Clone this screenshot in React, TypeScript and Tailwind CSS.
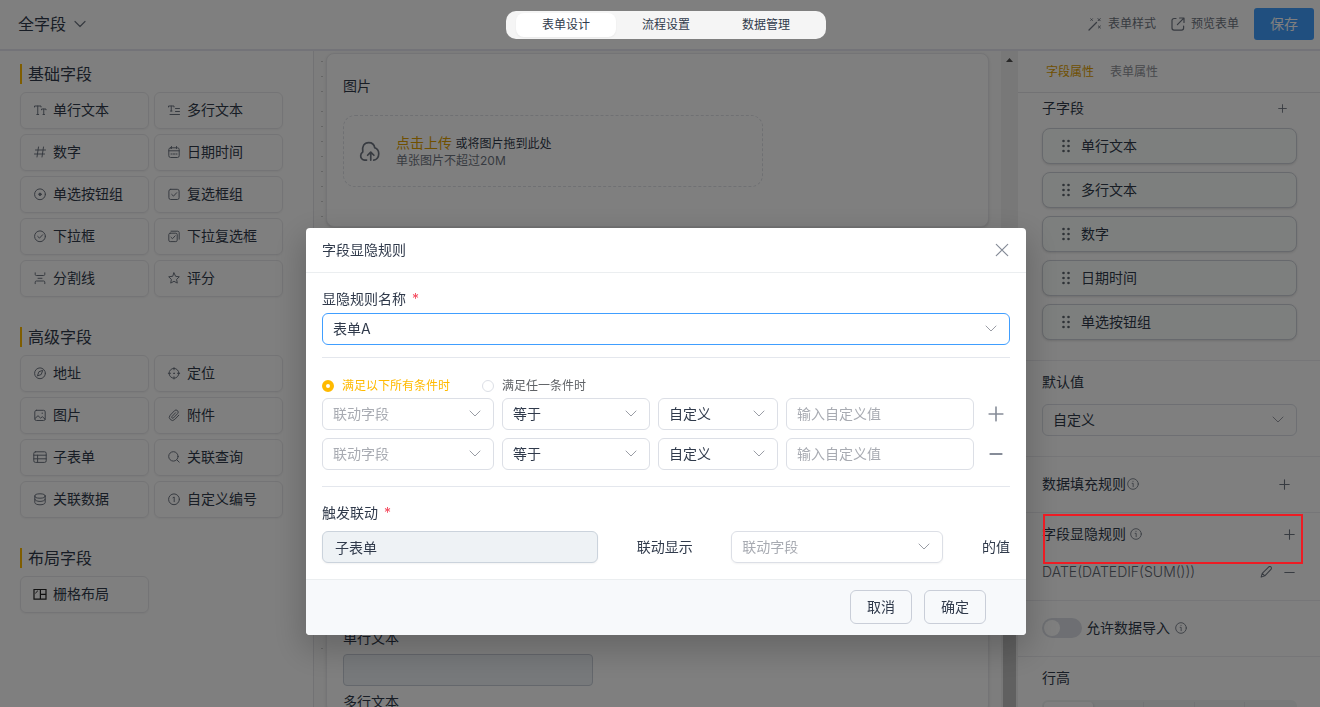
import { useId, useState, type ReactNode } from "react";
import clsx from "clsx";

interface FieldItem {
  label: string;
  icon: ReactNode;
}

interface FieldGroup {
  title: string;
  items: FieldItem[];
}

const fieldGroups: FieldGroup[] = [
  {
    title: "基础字段",
    items: [
      {
        label: "单行文本",
        icon: <path d="M1.5 4V3h6.5v1M4.75 3v8.5M3.8 11.5h1.9M8.5 6.8V6H13v.8M10.75 6v5.5M10 11.5h1.5" />,
      },
      {
        label: "多行文本",
        icon: <path d="M1.5 4V3H7v1M4.25 3v5M3.5 8h1.5M8.5 5.5h4M8.5 8.5h4M3 11.5h9.5" />,
      },
      { label: "数字", icon: <path d="M5.5 2 4 12M10.5 2 9 12M2.5 5h10M1.5 9h10" /> },
      {
        label: "日期时间",
        icon: (
          <>
            <rect x="1.8" y="2.8" width="10.4" height="9.7" rx="1.8" />
            <path d="M4.5 1.5v2M9.5 1.5v2M1.8 5.8h10.4M4 9h1.2M6.4 9h1.2M8.8 9H10" />
          </>
        ),
      },
      {
        label: "单选按钮组",
        icon: (
          <>
            <circle cx="7" cy="7.3" r="5.4" />
            <circle cx="7" cy="7.3" r="1.2" fill="currentColor" />
          </>
        ),
      },
      {
        label: "复选框组",
        icon: (
          <>
            <rect x="1.9" y="2.3" width="10.2" height="10.2" rx="1.8" />
            <path d="m4.7 7.4 1.8 1.7 3.2-3.4" />
          </>
        ),
      },
      {
        label: "下拉框",
        icon: (
          <>
            <circle cx="7" cy="7.3" r="5.4" />
            <path d="m4.7 7.4 1.8 1.7 3.2-3.4" />
          </>
        ),
      },
      {
        label: "下拉复选框",
        icon: (
          <>
            <rect x="1.8" y="4.2" width="8.4" height="8.4" rx="1.4" />
            <path d="M4 2.2h6.8c.8 0 1.4.6 1.4 1.4v6.6M4 8.3l1.5 1.4 2.7-2.9" />
          </>
        ),
      },
      {
        label: "分割线",
        icon: <path d="M2.2 1.8v1.6c0 .7.4 1.1 1.1 1.1h7.4c.7 0 1.1-.4 1.1-1.1V1.8M5 7.3h4M2.2 12.7v-1.6c0-.7.4-1.1 1.1-1.1h7.4c.7 0 1.1.4 1.1 1.1v1.6" />,
      },
      {
        label: "评分",
        icon: <path d="m7 1.9 1.6 3.4 3.7.5-2.7 2.6.7 3.7L7 10.3l-3.3 1.8.7-3.7-2.7-2.6 3.7-.5z" />,
      },
    ],
  },
  {
    title: "高级字段",
    items: [
      {
        label: "地址",
        icon: (
          <>
            <circle cx="7" cy="7.3" r="5.4" />
            <path d="M9.6 4.7 8.2 8.5 4.4 9.9l1.4-3.8z" />
          </>
        ),
      },
      {
        label: "定位",
        icon: (
          <>
            <circle cx="7" cy="7.3" r="4.9" />
            <circle cx="7" cy="7.3" r=".4" fill="currentColor" />
            <path d="M7 1.6v2.2M7 10.8V13M1.3 7.3h2.2M10.500 7.3h2.200" />
          </>
        ),
      },
      {
        label: "图片",
        icon: (
          <>
            <rect x="1.8" y="2.3" width="10.4" height="10.2" rx="1.6" />
            <path d="m2 10.5 3-2.8 2.6 2.4 1.7-1.4 2.8 2.4M9 5.2h.6" />
          </>
        ),
      },
      {
        label: "附件",
        icon: <path d="m11.8 7.2-4 4.2a3.1 3.1 0 0 1-4.6-4.2l4.3-4.5a2.1 2.1 0 0 1 3.1 2.9L6.5 9.9a1 1 0 0 1-1.5-1.4l3.6-3.8" />,
      },
      {
        label: "子表单",
        icon: (
          <>
            <rect x=".8" y="1.8" width="12.4" height="10.6" rx="1.6" />
            <path d="M.8 5.2h12.4M.8 8.8h12.4M4.6 5.2v7.2" />
          </>
        ),
      },
      {
        label: "关联查询",
        icon: (
          <>
            <circle cx="6.4" cy="6.4" r="4.7" />
            <path d="m9.8 9.8 2.400 2.400" />
          </>
        ),
      },
      {
        label: "关联数据",
        icon: (
          <>
            <ellipse cx="7" cy="4" rx="5.2" ry="2.2" />
            <path d="M1.8 4v6.6c0 1.2 2.3 2.2 5.2 2.2s5.2-1 5.2-2.2V4M1.8 7.2c0 1.2 2.3 2.2 5.2 2.2s5.2-1 5.2-2.2" />
          </>
        ),
      },
      {
        label: "自定义编号",
        icon: (
          <>
            <circle cx="7" cy="7.3" r="5.4" />
            <path d="M6 5.7 7.2 5v4.7" />
          </>
        ),
      },
    ],
  },
  {
    title: "布局字段",
    items: [
      {
        label: "栅格布局",
        icon: (
          <g className="text-[#222]" strokeWidth="1.2" strokeLinejoin="miter">
            <path d="M1 2.5h12v9.6H1zM7.4 2.5v9.600M7.4 7.3H13" />
            <path d="M2.600 6 4.600 4" strokeWidth="1" />
          </g>
        ),
      },
    ],
  },
];

const navTabs = ["表单设计", "流程设置", "数据管理"];
const subFields = ["单行文本", "多行文本", "数字", "日期时间", "单选按钮组"];

function Svg({ children, className }: { children: ReactNode; className: string }) {
  return (
    <svg
      viewBox="0 0 14 14"
      fill="none"
      stroke="currentColor"
      strokeLinecap="round"
      strokeLinejoin="round"
      aria-hidden="true"
      className={clsx("shrink-0", className)}
    >
      {children}
    </svg>
  );
}

function PlusIcon({ className }: { className: string }) {
  return (
    <Svg className={className}>
      <path d="M7 1v12M1 7h12" strokeWidth="1.4" />
    </Svg>
  );
}

function InfoIcon() {
  return (
    <Svg className="size-3 text-[#6f7682]">
      <circle cx="7" cy="7" r="6.2" />
      <path d="M6 6.2h1.2v4M7 3.8v.2" />
    </Svg>
  );
}

function SelectBox({
  id,
  label,
  options,
  placeholder,
  className,
  borderClass = "border-[#dcdfe6]",
}: {
  id?: string;
  label?: string;
  options: string[];
  placeholder?: boolean;
  className?: string;
  borderClass?: string;
}) {
  return (
    <div className={clsx("relative", className)}>
      <select
        id={id}
        aria-label={label}
        className={clsx(
          "h-8 w-full appearance-none rounded-md border bg-white pr-8 pl-2.5 text-sm outline-none",
          borderClass,
          placeholder ? "text-[#a8abb2]" : "text-[#303a4b]"
        )}
      >
        {options.map((option) => (
          <option key={option}>{option}</option>
        ))}
      </select>
      <Svg className="pointer-events-none absolute top-2 right-3 size-3.5 text-[#9a9da5]">
        <path d="m2 5 5 5 5-5" />
      </Svg>
    </div>
  );
}

function Header() {
  const [active, setActive] = useState(navTabs[0]);

  return (
    <header className="grid shrink-0 grid-cols-[1fr_auto_1fr] items-center border-b-2 border-[#e6e6f0] bg-white pr-1.5 pl-[18px]">
      <button className="flex h-[49px] items-center gap-[7px] justify-self-start pb-px text-base">
        全字段
        <Svg className="size-3.5 text-[#6f7682]">
          <path d="m2 4.5 5 5 5-5" strokeWidth="1.2" />
        </Svg>
      </button>

      <nav className="relative z-20 flex rounded-[10px] bg-[#f5f5f5] px-2.5 py-0.5">
        {navTabs.map((tab) => (
          <button
            key={tab}
            onClick={() => setActive(tab)}
            className={clsx(
              "h-6 w-[100px] rounded-lg text-xs",
              active === tab && "bg-white shadow-xs"
            )}
          >
            {tab}
          </button>
        ))}
      </nav>

      <div className="flex items-center gap-[15px] justify-self-end pb-px text-xs text-[#6f7682]">
        <button className="flex items-center gap-1.5">
          <Svg className="size-3.5">
            <path d="m1 13 7.500-7.500" strokeWidth="1.300" />
            <path d="M2.800 1.800l1.600 1.600M4.400 1.800 2.800 3.400M10 1.600l2.200 2.200M12.200 1.600 10 3.800M10.400 9l2 2M12.400 9l-2 2" />
          </Svg>
          表单样式
        </button>
        <button className="flex items-center gap-1.5">
          <Svg className="size-3.5">
            <path d="M5 1.5H3A2 2 0 0 0 1 3.5v7.6a2 2 0 0 0 2 2h7.6a2 2 0 0 0 2-2V9M8.6 1h4.4v4.4M12.6 1.4 6.4 7.6" strokeWidth="1.2" />
          </Svg>
          预览表单
        </button>
        <button className="h-8 w-[60px] rounded-[3px] bg-[#409eff] text-sm text-white">
          保存
        </button>
      </div>
    </header>
  );
}

function FieldSidebar() {
  return (
    <aside className="flex w-[314px] shrink-0 flex-col gap-[30px] border-r border-[#e4e4e8] bg-white pt-[13px] pr-[30px] pl-5">
      {fieldGroups.map((group) => (
        <section key={group.title}>
          <h2 className="mb-2 border-l-2 border-[#ffba00] pl-1.5 text-base/5">
            {group.title}
          </h2>
          <div className="grid grid-cols-2 gap-[5px]">
            {group.items.map((item) => (
              <button
                key={item.label}
                className="flex h-[37px] items-center gap-1.5 rounded-md border border-[#e9e9ec] px-3 pb-px text-sm shadow-xs"
              >
                <Svg className="size-3.5 text-[#6f7682]">{item.icon}</Svg>
                {item.label}
              </button>
            ))}
          </div>
        </section>
      ))}
    </aside>
  );
}

const dots =
  "bg-[radial-gradient(circle_at_center,#cdcdcd_1px,transparent_1px)] bg-[length:8px_15px]";

function Canvas() {
  return (
    <main className="flex min-w-0 flex-1 overflow-hidden bg-[#fafafa]">
      {/* Drag guides */}
      <div className="ml-1 w-2 shrink-0">
        <div className={clsx("h-[53px] bg-[position:0_3px]", dots)} />
        {[0, 1, 2, 3].map((n) => (
          <div key={n} className={clsx("h-[139px]", dots)} />
        ))}
      </div>

      <div className="flex min-w-0 flex-1 flex-col gap-1.5 pt-0.5 pr-3">
        <section className="shrink-0 rounded-lg border border-[#e9e9ec] bg-white px-4 pt-[22px] pb-[39px] shadow-sm">
          <h3 className="text-sm">图片</h3>
          <div className="mt-[19px] flex h-[72px] max-w-[420px] items-center gap-4 rounded-xl border border-dashed border-[#dfe1e6] pl-[15px]">
            <svg
              viewBox="0 0 20 20"
              fill="none"
              stroke="currentColor"
              strokeWidth="1.6"
              strokeLinecap="round"
              strokeLinejoin="round"
              aria-hidden="true"
              className="size-[21px] text-[#6f7682]"
            >
              <path d="M7.2 18.2H5.4A4 4 0 0 1 1.6 14c0-2 1-3 2-3.600C2.600 5 5 1.500 9.200 1.500c3.400 0 5.400 2.400 5.800 5 2.300.900 3.800 2.900 3.800 5.600 0 3.500-2.200 6.100-4.800 6.100" />
              <path d="M11.200 18.200v-6.700M8.200 13.600l3-3 3 3" />
            </svg>
            <div>
              <p className="text-xs/4.5">
                <a href="#upload" className="text-sm/4.5 text-[#e0a000]">
                  点击上传
                </a>{" "}
                或将图片拖到此处
              </p>
              <p className="text-xs/4 text-[#6f7682]">单张图片不超过20M</p>
            </div>
          </div>
        </section>

        <section className="flex-1 rounded-lg border border-[#e9e9ec] bg-white px-4 pt-[394px] shadow-sm">
          <label htmlFor="single-line" className="block text-sm">
            单行文本
          </label>
          <input
            id="single-line"
            disabled
            className="mt-1.5 mb-1.5 block h-8 w-[250px] rounded-sm border border-[#c8ced8] bg-[#eef2f6]"
          />
          <p className="text-sm">多行文本</p>
        </section>
      </div>

      {/* Scrollbar */}
      <div className="flex w-[17px] shrink-0 flex-col items-center bg-[#f1f1f1]">
        <svg viewBox="0 0 7 4" aria-hidden="true" className="mt-[7px] h-1 w-[7px] shrink-0">
          <path d="M0 4 3.500 0 7 4z" fill="#505050" />
        </svg>
        <div className="mt-[400px] w-[13px] flex-1 bg-[#c1c1c1]" />
      </div>
    </main>
  );
}

function PropertyPanel() {
  return (
    <aside className="w-[302px] shrink-0 overflow-hidden bg-white text-sm">
      <div className="flex h-[42px] items-center gap-4 border-b border-[#e4e4e8] pl-7 text-xs">
        <button className="text-[#e0a000]">字段属性</button>
        <button className="text-[#909399]">表单属性</button>
      </div>

      <section className="border-b border-[#ececf0] pr-[23px] pb-5 pl-6">
        <div className="flex h-[30px] items-center justify-between pr-2.5">
          <h3>子字段</h3>
          <button aria-label="添加子字段">
            <PlusIcon className="size-[9px] text-[#6f7682]" />
          </button>
        </div>
        <ul className="mt-[5px] space-y-2">
          {subFields.map((field) => (
            <li
              key={field}
              className="flex h-9 items-center gap-[11px] rounded-lg border border-[#cfd3da] bg-[#fbfffd] pl-[19px] shadow-sm"
            >
              <svg viewBox="0 0 8 14" aria-hidden="true" className="h-3.5 w-2 fill-[#5f6670]">
                {[2, 7, 12].map((y) => (
                  <g key={y}>
                    <circle cx="1.500" cy={y} r="1.300" />
                    <circle cx="6.500" cy={y} r="1.300" />
                  </g>
                ))}
              </svg>
              {field}
            </li>
          ))}
        </ul>
      </section>

      <section className="border-b border-[#ececf0] pt-[11px] pr-[23px] pb-5 pl-6">
        <label htmlFor="default-value" className="mb-3 block">
          默认值
        </label>
        <SelectBox id="default-value" options={["自定义"]} />
      </section>

      <section className="flex h-14 items-center border-b border-[#ececf0] pr-[30px] pb-px pl-6">
        <h3 className="mr-px">数据填充规则</h3>
        <InfoIcon />
        <button aria-label="添加数据填充规则" className="ml-auto">
          <PlusIcon className="size-[11px] text-[#6f7682]" />
        </button>
      </section>

      <section className="relative border-b border-[#ececf0] pr-[25px] pb-[11px] pl-6">
        <div className="flex h-[42px] items-center gap-1">
          <h3>字段显隐规则</h3>
          <InfoIcon />
          <button aria-label="添加字段显隐规则" className="ml-auto">
            <PlusIcon className="size-[11px] text-[#6f7682]" />
          </button>
        </div>
        <div className="flex h-[34px] items-center gap-3">
          <span className="flex-1 font-light text-[#5f6670]">DATE(DATEDIF(SUM()))</span>
          <button aria-label="编辑规则">
            <Svg className="size-3 text-[#6f7682]">
              <path d="M10 1.200a1.900 1.900 0 0 1 2.800 2.700L5.600 11.400 1.300 13l1.300-4.400zM2.600 8.600l3 2.800" strokeWidth="1.200" />
            </Svg>
          </button>
          <button aria-label="删除规则">
            <Svg className="size-[11px] text-[#6f7682]">
              <path d="M1 7h12" strokeWidth="1.400" />
            </Svg>
          </button>
        </div>
        {/* Highlight over the dimmed page */}
        <div className="pointer-events-none absolute top-px right-[17px] left-[25px] z-20 h-[50px] border-2 border-[#ed1c24]" />
      </section>

      <section className="flex h-14 items-center gap-1 border-b border-[#ececf0] pb-px pl-6">
        <label className="flex items-center gap-1">
          <input
            type="checkbox"
            role="switch"
            className="flex h-5 w-10 appearance-none items-center rounded-full bg-[#dcdfe6] px-0.5 before:size-4 before:rounded-full before:bg-white checked:bg-[#409eff] checked:before:ml-auto"
          />
          允许数据导入
        </label>
        <span className="ml-px">
          <InfoIcon />
        </span>
      </section>

      <section className="pt-[11px] pr-[23px] pl-6">
        <h3>行高</h3>
        <div className="mt-3 grid h-9 grid-cols-5 divide-x divide-[#e4e7ea] rounded-md bg-[#f1f5f4] p-0.5">
          <button aria-label="行高一" className="rounded-sm bg-white shadow" />
          <button aria-label="行高二" />
          <button aria-label="行高三" />
          <button aria-label="行高四" />
          <button aria-label="行高五" />
        </div>
      </section>
    </aside>
  );
}

function ConditionRow({ first }: { first?: boolean }) {
  return (
    <div className="flex items-center gap-2">
      <SelectBox label="联动字段" options={["联动字段"]} placeholder className="w-[172px]" />
      <SelectBox label="条件" options={["等于"]} className="w-[148px]" />
      <SelectBox label="值类型" options={["自定义"]} className="w-[120px]" />
      <input
        type="text"
        aria-label="自定义值"
        placeholder="输入自定义值"
        className="h-8 min-w-0 flex-1 rounded-md border border-[#dcdfe6] px-2.5 pb-0.5 text-sm outline-none placeholder:text-[#a8abb2]"
      />
      <button
        aria-label={first ? "添加条件" : "删除条件"}
        className="flex w-7 justify-center text-[#868c98]"
      >
        {first ? (
          <PlusIcon className="size-4" />
        ) : (
          <Svg className="size-4">
            <path d="M2 7h10" strokeWidth="1.600" />
          </Svg>
        )}
      </button>
    </div>
  );
}

function RuleDialog() {
  const id = useId();
  const [mode, setMode] = useState("all");

  const modes = [
    { value: "all", label: "满足以下所有条件时" },
    { value: "any", label: "满足任一条件时" },
  ];

  return (
    <div className="fixed inset-0 z-10 flex items-start justify-center bg-black/50 pt-[228px] pl-3">
      <div
        role="dialog"
        aria-labelledby={`${id}-title`}
        className="w-[720px] max-w-full overflow-hidden rounded-sm bg-white text-sm shadow-[0_12px_32px_4px_rgba(0,0,0,0.2)]"
      >
        <div className="flex h-[45px] items-center justify-between border-b border-[#ebeef0] px-4 pb-px">
          <h2 id={`${id}-title`}>字段显隐规则</h2>
          <button aria-label="关闭" className="text-[#868c98]">
            <Svg className="size-4">
              <path d="m2 2 10 10M12 2 2 12" />
            </Svg>
          </button>
        </div>

        <div className="px-4 pt-4 pb-4">
          <label htmlFor={`${id}-name`} className="mb-1 block">
            显隐规则名称 <span className="ml-0.5 text-[#f5475c]">*</span>
          </label>
          <SelectBox id={`${id}-name`} options={["表单A"]} borderClass="border-[#409eff]" />

          <div className="mt-3 border-y border-[#e4e7ed] pt-5 pb-4">
            <div className="mb-1 flex h-4 items-center gap-8">
              {modes.map((m) => (
                <label
                  key={m.value}
                  className={clsx(
                    "flex items-center gap-2 text-xs",
                    mode === m.value ? "text-[#ffba00]" : "text-[#5f6266]"
                  )}
                >
                  <input
                    type="radio"
                    name={`${id}-mode`}
                    checked={mode === m.value}
                    onChange={() => setMode(m.value)}
                    className="size-3 appearance-none rounded-full border border-[#dcdfe6] bg-white checked:border-4 checked:border-[#ffba00]"
                  />
                  {m.label}
                </label>
              ))}
            </div>
            <div className="space-y-2">
              <ConditionRow first />
              <ConditionRow />
            </div>
          </div>

          <label htmlFor={`${id}-target`} className="mt-4 mb-2 block">
            触发联动 <span className="ml-0.5 text-[#f5475c]">*</span>
          </label>
          <div className="flex items-center justify-between">
            <input
              id={`${id}-target`}
              type="text"
              readOnly
              value="子表单"
              className="h-8 w-[276px] rounded-md border border-[#cbd3dc] bg-[#eef2f5] px-3 shadow-xs outline-none"
            />
            <span>联动显示</span>
            <SelectBox
              label="联动显示字段"
              options={["联动字段"]}
              placeholder
              className="w-[212px] rounded-md shadow-xs"
            />
            <span>的值</span>
          </div>
        </div>

        <div className="flex justify-end gap-3 border-t border-[#ebeef0] bg-[#f7f9fb] pt-2.5 pr-10 pb-[11px]">
          <button className="h-[34px] w-[62px] rounded-md border border-[#c9ced8]">取消</button>
          <button className="h-[34px] w-[62px] rounded-md border border-[#c9ced8]">确定</button>
        </div>
      </div>
    </div>
  );
}

export default function App() {
  return (
    <div className="flex h-screen flex-col overflow-hidden bg-white font-['Inter','Noto_Sans_CJK_SC',sans-serif] text-[#303a4b]">
      <Header />
      <div className="flex min-h-0 flex-1">
        <FieldSidebar />
        <Canvas />
        <PropertyPanel />
      </div>
      <RuleDialog />
    </div>
  );
}
